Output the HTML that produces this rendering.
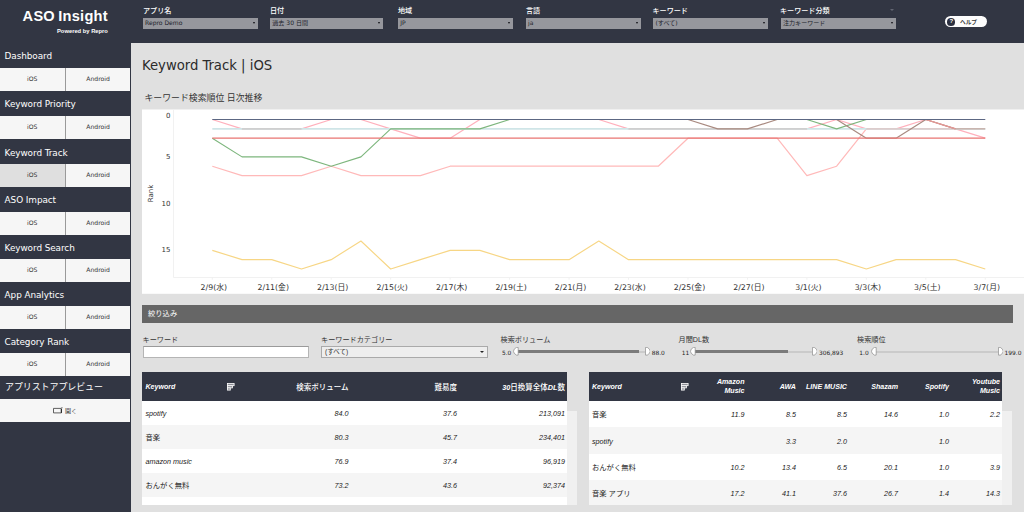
<!DOCTYPE html>
<html lang="ja">
<head>
<meta charset="utf-8">
<title>ASO Insight - Keyword Track | iOS</title>
<style>
*{box-sizing:border-box;margin:0;padding:0}
html,body{width:1024px;height:512px;overflow:hidden;background:#e0e0e0}
body{position:relative;font-family:"Liberation Sans","Noto Sans CJK JP",sans-serif;color:#333;-webkit-text-size-adjust:none}
.abs{position:absolute;white-space:nowrap}
/* frames */
#topbar{left:0;top:0;width:1024px;height:43px;background:#323643}
#side{left:0;top:0;width:131px;height:512px;background:#323643}
/* sidebar */
.sh{left:4.6px;color:#fff;font-size:8.9px;line-height:12px;font-family:"DejaVu Sans","Noto Sans CJK JP",sans-serif;letter-spacing:-0.08px;margin-top:0.5px}
.sh.jp{font-size:9px;letter-spacing:-0.1px;left:5px;font-weight:400;margin-top:0.8px}
.sb{height:23px;background:#f6f6f6;color:#333;font-size:6.1px;line-height:22px;text-align:center;font-family:"DejaVu Sans","Noto Sans CJK JP",sans-serif}
.sb.l{left:0;width:64.5px}
.sb.r{left:66px;width:64.2px}
.sb.sel{background:#dfdfdf}
.sbsep{left:64.5px;width:1.5px;height:23px;background:#9a9a9a}
/* top filters */
.fl{top:6.4px;color:#fff;font-size:7.1px;font-weight:500;line-height:10px}
.dd{top:17.9px;width:115.3px;height:10.8px;background:#96979d;color:#211f2c;font-size:6.05px;line-height:10.4px;padding-left:2.5px;font-family:"DejaVu Sans","Noto Sans CJK JP",sans-serif}
.dd:after{content:"";position:absolute;right:3.2px;top:4.1px;border-left:1.9px solid transparent;border-right:1.9px solid transparent;border-top:2.9px solid #0c0c12}
/*RESTCSS_S*/
.f2l{top:334.9px;font-size:7.15px;line-height:10px;color:#333}
.dd2{height:11.2px;background:#eee;border:0.5px solid #aaa;font-size:6.5px;line-height:10px;padding-left:3px;color:#333}
.dd2:after{content:"";position:absolute;right:3px;top:4px;border-left:2px solid transparent;border-right:2px solid transparent;border-top:2.5px solid #222}
.sv{top:348.5px;font-size:5.9px;line-height:8px;color:#222;font-family:"DejaVu Sans",sans-serif}
.th{color:#fff;font-size:7.1px;line-height:9px;font-weight:bold;font-style:italic}
.td{color:#222;font-size:7.2px;line-height:9px;font-style:italic}
.j{font-style:normal;font-size:7.3px}
.th .j{font-weight:500;font-size:7.5px}
/*RESTCSS_E*/
</style>
</head>
<body>
<div id="topbar" class="abs"></div>
<div id="side" class="abs"></div>

<!-- logo -->
<div class="abs" id="logo" style="left:22.6px;top:5.7px;color:#fff;font-weight:bold;font-size:14.6px;line-height:20px;letter-spacing:0.25px;word-spacing:-1px">ASO Insight</div>
<div class="abs" id="logosub" style="left:57px;top:26.7px;color:#fff;font-weight:bold;font-size:5.8px;line-height:9px">Powered by Repro</div>

<!-- sidebar sections -->
<div class="abs sh" style="top:49px">Dashboard</div>
<div class="abs sb l" style="top:67.5px">iOS</div><div class="abs sbsep" style="top:67.5px"></div><div class="abs sb r" style="top:67.5px">Android</div>
<div class="abs sh" style="top:97.5px">Keyword Priority</div>
<div class="abs sb l" style="top:115.5px">iOS</div><div class="abs sbsep" style="top:115.5px"></div><div class="abs sb r" style="top:115.5px">Android</div>
<div class="abs sh" style="top:146px">Keyword Track</div>
<div class="abs sb l sel" style="top:163.5px">iOS</div><div class="abs sbsep" style="top:163.5px"></div><div class="abs sb r" style="top:163.5px">Android</div>
<div class="abs sh" style="top:193.5px">ASO Impact</div>
<div class="abs sb l" style="top:211.75px">iOS</div><div class="abs sbsep" style="top:211.75px"></div><div class="abs sb r" style="top:211.75px">Android</div>
<div class="abs sh" style="top:241.5px">Keyword Search</div>
<div class="abs sb l" style="top:259px">iOS</div><div class="abs sbsep" style="top:259px"></div><div class="abs sb r" style="top:259px">Android</div>
<div class="abs sh" style="top:288.5px">App Analytics</div>
<div class="abs sb l" style="top:306px">iOS</div><div class="abs sbsep" style="top:306px"></div><div class="abs sb r" style="top:306px">Android</div>
<div class="abs sh" style="top:335.5px">Category Rank</div>
<div class="abs sb l" style="top:352.75px">iOS</div><div class="abs sbsep" style="top:352.75px"></div><div class="abs sb r" style="top:352.75px">Android</div>
<div class="abs sh jp" style="top:380.5px">アプリストアプレビュー</div>
<div class="abs sb" style="left:0;width:130.2px;top:399.3px;height:22.8px;line-height:24.8px"><svg width="10" height="6.5" viewBox="0 0 10 6.5" style="vertical-align:-0.6px;margin-right:2px"><path d="M0.5 1.4H8.3V5.9H0.5Z" fill="none" stroke="#3a3a3a" stroke-width="0.8"/><path d="M8.4 2V5.9" stroke="#222" stroke-width="1"/><rect x="8.5" y="0.3" width="0.9" height="0.9" fill="#222"/></svg>開く</div>

<!-- top filters -->
<div class="abs fl" style="left:143px">アプリ名</div><div class="abs dd" style="left:142.5px">Repro Demo</div>
<div class="abs fl" style="left:270px">日付</div><div class="abs dd" style="left:269.8px;width:113.1px">過去 30 日間</div>
<div class="abs fl" style="left:398px">地域</div><div class="abs dd" style="left:397.7px">JP</div>
<div class="abs fl" style="left:526px">言語</div><div class="abs dd" style="left:525.5px">ja</div>
<div class="abs fl" style="left:652.5px">キーワード</div><div class="abs dd" style="left:653px">(すべて)</div>
<div class="abs fl" style="left:780px">キーワード分類</div><div class="abs dd" style="left:780.5px">注力キーワード</div>
<div class="abs" style="left:890px;top:9px;border-left:2px solid transparent;border-right:2px solid transparent;border-top:2.4px solid #636673"></div>
<!-- help -->
<div class="abs" id="help" style="left:944.8px;top:16.1px;width:42.4px;height:11.1px;border-radius:5.6px;background:#fdfdfd;color:#3a3a3a;font-size:5.7px;font-weight:bold;line-height:12.1px;padding-left:15.2px">ヘルプ</div>
<div class="abs" style="left:947.4px;top:17.9px;width:7.7px;height:7.7px;border-radius:50%;background:#2c3040;color:#fff;font-size:6px;line-height:7.7px;text-align:center;font-weight:bold">?</div>

<!-- titles -->
<div class="abs" id="title" style="left:142px;top:55px;font-size:14.7px;line-height:20px;color:#2b2b2b;font-family:'DejaVu Sans Condensed','DejaVu Sans','Noto Sans CJK JP',sans-serif;font-stretch:condensed">Keyword Track | iOS</div>
<div class="abs" id="subtitle" style="left:144.5px;top:92.1px;font-size:8.9px;line-height:13px;color:#333">キーワード検索順位 日次推移</div>

<!--CHART_S-->
<svg class="abs" id="chart" style="left:0;top:0" width="1024" height="512" viewBox="0 0 1024 512">
<rect x="142" y="109.5" width="882" height="184.3" fill="#fff"/>
<path d="M173.5 110V277.5H1024" fill="none" stroke="#f1f1f1" stroke-width="1"/>
<path d="M212.3 277.5v2.2 M271.76 277.5v2.2 M331.22 277.5v2.2 M390.68 277.5v2.2 M450.14 277.5v2.2 M509.6 277.5v2.2 M569.06 277.5v2.2 M628.52 277.5v2.2 M687.98 277.5v2.2 M747.44 277.5v2.2 M806.9 277.5v2.2 M866.36 277.5v2.2 M925.82 277.5v2.2 M985.28 277.5v2.2" stroke="#f1f1f1" stroke-width="1" fill="none"/>
<polyline points="212.3,250.33 242.03,259.67 271.76,259.67 301.49,269.01 331.22,259.67 360.95,240.98 390.68,269.01 420.41,259.67 450.14,250.33 479.87,250.33 509.6,259.67 539.33,259.67 569.06,259.67 598.79,240.98 628.52,259.67 658.25,259.67 687.98,259.67 717.71,259.67 747.44,259.67 777.17,259.67 806.9,259.67 836.63,259.67 866.36,269.01 896.09,259.67 925.82,259.67 955.55,259.67 985.28,269.01" fill="none" stroke="#f7d685" stroke-width="1.15" stroke-linejoin="round"/>
<polyline points="212.3,166.22 242.03,175.56 271.76,175.56 301.49,175.56 331.22,166.22 360.95,175.56 390.68,175.56 420.41,175.56 450.14,166.22 479.87,166.22 509.6,166.22 539.33,166.22 569.06,166.22 598.79,166.22 628.52,166.22 658.25,166.22 687.98,138.19 717.71,138.19 747.44,138.19 777.17,138.19 806.9,175.56 836.63,166.22 866.36,128.84" fill="none" stroke="#ffb9b9" stroke-width="1.2" stroke-linejoin="round"/>
<polyline points="212.3,119.5 242.03,128.84 271.76,128.84 301.49,128.84 331.22,119.5 360.95,119.5 390.68,128.84 420.41,138.19 450.14,138.19 479.87,119.5 509.6,119.5 539.33,119.5 569.06,119.5 598.79,119.5 628.52,128.84 658.25,128.84 687.98,128.84 717.71,128.84 747.44,128.84 777.17,128.84 806.9,128.84 836.63,119.5 866.36,128.84 896.09,128.84 925.82,119.5 955.55,128.84 985.28,138.19" fill="none" stroke="#ffb0bc" stroke-width="1.2" stroke-linejoin="round"/>
<polyline points="212.3,128.84 985.28,128.84" fill="none" stroke="#cfe5e7" stroke-width="1.6" stroke-linejoin="round"/>
<polyline points="242.03,128.84 301.49,128.84" fill="none" stroke="#cfcfcf" stroke-width="1.6" stroke-linejoin="round"/>
<polyline points="628.52,128.84 806.9,128.84" fill="none" stroke="#cfcfcf" stroke-width="1.6" stroke-linejoin="round"/>
<polyline points="866.36,128.84 955.55,128.84" fill="none" stroke="#dccccc" stroke-width="1.6" stroke-linejoin="round"/>
<polyline points="955.55,128.84 985.28,128.84" fill="none" stroke="#c9b3ad" stroke-width="1.6" stroke-linejoin="round"/>
<polyline points="212.3,138.19 242.03,156.88 271.76,156.88 301.49,156.88 331.22,166.22 360.95,156.88 390.68,128.84 420.41,128.84 450.14,128.84 479.87,128.84 509.6,119.5" fill="none" stroke="#7db67d" stroke-width="1.15" stroke-linejoin="round"/>
<polyline points="806.9,119.5 836.63,128.84 866.36,119.5" fill="none" stroke="#7db67d" stroke-width="1.15" stroke-linejoin="round"/>
<polyline points="687.98,119.5 717.71,128.84 747.44,128.84 777.17,119.5" fill="none" stroke="#a98a80" stroke-width="1.2" stroke-linejoin="round"/>
<polyline points="836.63,119.5 866.36,138.19 896.09,138.19 925.82,119.5 955.55,128.84" fill="none" stroke="#a98a80" stroke-width="1.2" stroke-linejoin="round"/>
<polyline points="925.82,119.5 955.55,128.84" fill="none" stroke="#e59a96" stroke-width="1.2" stroke-linejoin="round"/>
<polyline points="212.3,138.19 985.28,138.19" fill="none" stroke="#e97472" stroke-width="1.15" stroke-linejoin="round"/>
<polyline points="212.3,119.5 985.28,119.5" fill="none" stroke="#5c6783" stroke-width="1.2" stroke-linejoin="round"/>
<g font-family="DejaVu Sans, sans-serif" font-size="7" fill="#333" text-anchor="end">
<text x="170.5" y="118">0</text>
<text x="170.5" y="159.3">5</text>
<text x="170.5" y="205.8">10</text>
<text x="170.5" y="252">15</text>
</g>
<text transform="translate(153.4,202.3) rotate(-90)" font-family="DejaVu Sans, sans-serif" font-size="7" fill="#333">Rank</text>
<g font-family="DejaVu Sans, Noto Sans CJK JP, sans-serif" font-size="7.8" fill="#333" text-anchor="middle">
<text x="213.8" y="289.8">2/9(水)</text>
<text x="273.26" y="289.8">2/11(金)</text>
<text x="332.72" y="289.8">2/13(日)</text>
<text x="392.18" y="289.8">2/15(火)</text>
<text x="451.64" y="289.8">2/17(木)</text>
<text x="511.1" y="289.8">2/19(土)</text>
<text x="570.56" y="289.8">2/21(月)</text>
<text x="630.02" y="289.8">2/23(水)</text>
<text x="689.48" y="289.8">2/25(金)</text>
<text x="748.94" y="289.8">2/27(日)</text>
<text x="808.4" y="289.8">3/1(火)</text>
<text x="867.86" y="289.8">3/3(木)</text>
<text x="927.32" y="289.8">3/5(土)</text>
<text x="986.78" y="289.8">3/7(月)</text>
</g>
</svg>
<!--CHART_E-->
<!--REST_S-->
<div class="abs" style="left:142px;top:305px;width:871px;height:17.5px;background:#666"></div>
<div class="abs" style="left:148px;top:308.9px;color:#fff;font-size:7.3px;line-height:10px">絞り込み</div>
<div class="abs f2l" style="left:142.5px">キーワード</div>
<div class="abs f2l" style="left:321px">キーワードカテゴリー</div>
<div class="abs f2l" style="left:500.5px">検索ボリューム</div>
<div class="abs f2l" style="left:678.5px">月間DL数</div>
<div class="abs f2l" style="left:857px">検索順位</div>
<div class="abs" style="left:142.5px;top:346.4px;width:166.5px;height:11.2px;background:#fff;border:0.6px solid #b5b5b5;border-top-color:#9a9a9a"></div>
<div class="abs dd2" style="left:321px;top:346.4px;width:167px">(すべて)</div>
<div class="abs sv" style="left:501.9px">5.0</div>
<div class="abs" style="left:518.1px;top:350.8px;width:127.19999999999993px;height:2px;background:#cbcbcb"></div>
<div class="abs" style="left:518.4px;top:350.3px;width:120.2px;height:2.8px;background:#7b7b7b"></div>
<svg class="abs" style="left:513.1px;top:347.1px" width="5.7" height="8.5" viewBox="0 0 5.7 8.5"><path d="M5.2 0.4H3.4Q0.5 2 0.5 4.25Q0.5 6.5 3.4 8.1H5.2Z" fill="#fff" stroke="#8a8a8a" stroke-width="0.7"/></svg>
<svg class="abs" style="left:644.8px;top:347.1px" width="5.7" height="8.5" viewBox="0 0 5.7 8.5"><path d="M0.5 0.4H2.3Q5.2 2 5.2 4.25Q5.2 6.5 2.3 8.1H0.5Z" fill="#fff" stroke="#8a8a8a" stroke-width="0.7"/></svg>
<div class="abs sv" style="left:651.7px">88.0</div>
<div class="abs sv" style="left:681.8px">11</div>
<div class="abs" style="left:695.1px;top:350.8px;width:117.10000000000002px;height:2px;background:#cbcbcb"></div>
<div class="abs" style="left:695.4px;top:350.3px;width:92.80000000000003px;height:2.8px;background:#7b7b7b"></div>
<svg class="abs" style="left:690.1px;top:347.1px" width="5.7" height="8.5" viewBox="0 0 5.7 8.5"><path d="M5.2 0.4H3.4Q0.5 2 0.5 4.25Q0.5 6.5 3.4 8.1H5.2Z" fill="#fff" stroke="#8a8a8a" stroke-width="0.7"/></svg>
<svg class="abs" style="left:811.7px;top:347.1px" width="5.7" height="8.5" viewBox="0 0 5.7 8.5"><path d="M0.5 0.4H2.3Q5.2 2 5.2 4.25Q5.2 6.5 2.3 8.1H0.5Z" fill="#fff" stroke="#8a8a8a" stroke-width="0.7"/></svg>
<div class="abs sv" style="left:818.9px">306,893</div>
<div class="abs sv" style="left:859.3px">1.0</div>
<div class="abs" style="left:876.2px;top:350.8px;width:121.89999999999998px;height:2px;background:#cbcbcb"></div>
<svg class="abs" style="left:871.2px;top:347.1px" width="5.7" height="8.5" viewBox="0 0 5.7 8.5"><path d="M5.2 0.4H3.4Q0.5 2 0.5 4.25Q0.5 6.5 3.4 8.1H5.2Z" fill="#fff" stroke="#8a8a8a" stroke-width="0.7"/></svg>
<svg class="abs" style="left:997.6px;top:347.1px" width="5.7" height="8.5" viewBox="0 0 5.7 8.5"><path d="M0.5 0.4H2.3Q5.2 2 5.2 4.25Q5.2 6.5 2.3 8.1H0.5Z" fill="#fff" stroke="#8a8a8a" stroke-width="0.7"/></svg>
<div class="abs sv" style="left:1004.6px">199.0</div>
<div class="abs" style="left:567px;top:410.7px;width:9.6px;height:94.3px;background:#f0f0f0"></div>
<div class="abs" style="left:142px;top:372px;width:425px;height:133px;background:#fff"></div>
<div class="abs" style="left:142px;top:372px;width:425px;height:29px;background:#323643"></div>
<div class="abs th" style="left:145.5px;top:383.2px;">Keyword</div>
<svg class="abs" style="left:227px;top:382.6px" width="8" height="8" viewBox="0 0 8 8"><g fill="#8d8f97" stroke="#fff" stroke-width="0.8"><rect x="0.5" y="0.5" width="6.6" height="2.2"/><rect x="0.5" y="2.7" width="4.9" height="2.2"/><rect x="0.5" y="4.9" width="2.8" height="2.2"/></g></svg>
<div class="abs th" style="right:675.5px;top:383.2px;text-align:right;"><span class="j">検索ボリューム</span></div>
<div class="abs th" style="right:567px;top:383.2px;text-align:right;"><span class="j">難易度</span></div>
<div class="abs th" style="right:459px;top:383.2px;text-align:right;font-size:7.3px">30<span class="j">日換算全体</span>DL<span class="j">数</span></div>
<div class="abs td" style="left:145.5px;top:408.9px">spotify</div>
<div class="abs td" style="right:675.5px;top:408.9px">84.0</div>
<div class="abs td" style="right:567px;top:408.9px">37.6</div>
<div class="abs td" style="right:459px;top:408.9px">213,091</div>
<div class="abs" style="left:142px;top:425.1px;width:425px;height:24.1px;background:#f5f5f5"></div>
<div class="abs td" style="left:145.5px;top:433.0px"><span class="j">音楽</span></div>
<div class="abs td" style="right:675.5px;top:433.0px">80.3</div>
<div class="abs td" style="right:567px;top:433.0px">45.7</div>
<div class="abs td" style="right:459px;top:433.0px">234,401</div>
<div class="abs td" style="left:145.5px;top:457.1px">amazon music</div>
<div class="abs td" style="right:675.5px;top:457.1px">76.9</div>
<div class="abs td" style="right:567px;top:457.1px">37.4</div>
<div class="abs td" style="right:459px;top:457.1px">96,919</div>
<div class="abs" style="left:142px;top:473.3px;width:425px;height:24.1px;background:#f5f5f5"></div>
<div class="abs td" style="left:145.5px;top:481.2px"><span class="j">おんがく無料</span></div>
<div class="abs td" style="right:675.5px;top:481.2px">73.2</div>
<div class="abs td" style="right:567px;top:481.2px">43.6</div>
<div class="abs td" style="right:459px;top:481.2px">92,374</div>
<div class="abs" style="left:1002px;top:410.8px;width:9.6px;height:94.6px;background:#f0f0f0"></div>
<div class="abs" style="left:589px;top:372px;width:413px;height:133px;background:#fff"></div>
<div class="abs" style="left:589px;top:372px;width:413px;height:29px;background:#323643"></div>
<div class="abs th" style="left:592px;top:383.2px;">Keyword</div>
<svg class="abs" style="left:680.6px;top:382.6px" width="8" height="8" viewBox="0 0 8 8"><g fill="#8d8f97" stroke="#fff" stroke-width="0.8"><rect x="0.5" y="0.5" width="6.6" height="2.2"/><rect x="0.5" y="2.7" width="4.9" height="2.2"/><rect x="0.5" y="4.9" width="2.8" height="2.2"/></g></svg>
<div class="abs th" style="right:279.5px;top:377.8px;text-align:right;line-height:9px">Amazon<br>Music</div>
<div class="abs th" style="right:228px;top:383.2px;text-align:right;">AWA</div>
<div class="abs th" style="right:177px;top:383.2px;text-align:right;">LINE MUSIC</div>
<div class="abs th" style="right:126px;top:383.2px;text-align:right;">Shazam</div>
<div class="abs th" style="right:75px;top:383.2px;text-align:right;">Spotify</div>
<div class="abs th" style="right:24px;top:377.8px;text-align:right;line-height:9px">Youtube<br>Music</div>
<div class="abs td" style="left:592px;top:409.9px"><span class="j">音楽</span></div>
<div class="abs td" style="right:279.5px;top:409.9px">11.9</div>
<div class="abs td" style="right:228px;top:409.9px">8.5</div>
<div class="abs td" style="right:177px;top:409.9px">8.5</div>
<div class="abs td" style="right:126px;top:409.9px">14.6</div>
<div class="abs td" style="right:75px;top:409.9px">1.0</div>
<div class="abs td" style="right:24px;top:409.9px">2.2</div>
<div class="abs" style="left:589px;top:427.1px;width:413px;height:26.7px;background:#f5f5f5"></div>
<div class="abs td" style="left:592px;top:437.3px">spotify</div>
<div class="abs td" style="right:228px;top:437.3px">3.3</div>
<div class="abs td" style="right:177px;top:437.3px">2.0</div>
<div class="abs td" style="right:75px;top:437.3px">1.0</div>
<div class="abs td" style="left:592px;top:462.6px"><span class="j">おんがく無料</span></div>
<div class="abs td" style="right:279.5px;top:462.6px">10.2</div>
<div class="abs td" style="right:228px;top:462.6px">13.4</div>
<div class="abs td" style="right:177px;top:462.6px">6.5</div>
<div class="abs td" style="right:126px;top:462.6px">20.1</div>
<div class="abs td" style="right:75px;top:462.6px">1.0</div>
<div class="abs td" style="right:24px;top:462.6px">3.9</div>
<div class="abs" style="left:589px;top:479.7px;width:413px;height:25.3px;background:#f5f5f5"></div>
<div class="abs td" style="left:592px;top:489.2px"><span class="j">音楽</span> <span class="j">アプリ</span></div>
<div class="abs td" style="right:279.5px;top:489.2px">17.2</div>
<div class="abs td" style="right:228px;top:489.2px">41.1</div>
<div class="abs td" style="right:177px;top:489.2px">37.6</div>
<div class="abs td" style="right:126px;top:489.2px">26.7</div>
<div class="abs td" style="right:75px;top:489.2px">1.4</div>
<div class="abs td" style="right:24px;top:489.2px">14.3</div>
<!--REST_E-->
<!--TABLES-->
</body>
</html>
